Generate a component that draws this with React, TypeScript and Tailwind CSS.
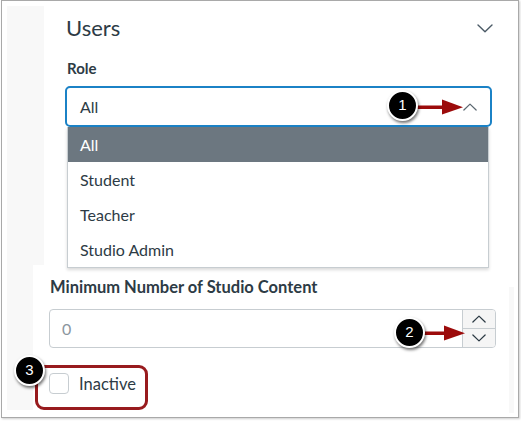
import { useState } from "react";

const roles = ["All", "Student", "Teacher", "Studio Admin"];

function Chevron({ up, className }: { up?: boolean; className?: string }) {
  return (
    <svg viewBox="0 0 16 9" className={className} fill="none">
      <path
        d={up ? "M1 8L8 1.2L15 8" : "M1 1L8 7.8L15 1"}
        stroke="currentColor"
        strokeWidth="1.4"
        strokeLinecap="round"
        strokeLinejoin="round"
      />
    </svg>
  );
}

function Callout({ n, className }: { n: number; className: string }) {
  return (
    <div
      className={`absolute w-[31px] h-[31px] rounded-full bg-black border-2 border-white shadow-[1px_2px_3px_rgba(0,0,0,0.55)] flex items-center justify-center text-white text-[15px] font-['Liberation_Sans',sans-serif] ${className}`}
    >
      {n}
    </div>
  );
}

function Arrow({ className, w }: { className: string; w: number }) {
  return (
    <svg className={`absolute ${className}`} width={w} height="16" viewBox={`0 0 ${w} 16`}>
      <rect x="0" y="6.5" width={w - 19} height="3.5" fill="#9c0b0b" />
      <polygon points={`${w - 21},0.5 ${w},8.2 ${w - 21},15.5`} fill="#9c0b0b" />
    </svg>
  );
}

export default function App() {
  const [role] = useState("All");

  return (
    <div className="w-[521px] h-[421px] bg-white font-['Lato',sans-serif] text-[#2d3b45]">
      <div className="relative ml-[1px] w-[518px] h-[418px] border border-[#a9a9a9] shadow-[1px_1px_2px_rgba(0,0,0,0.2)] flex pt-[5px] pl-[5px] pr-[4px]">
        {/* faint side strips */}
        <div className="w-[37px] flex flex-col">
          <div className="h-[259px] bg-[#f8f8f8]" />
          <div className="w-[26px] h-[145px] bg-[#f8f8f8]" />
        </div>

        <div className="flex-1 flex flex-col">
          <div className="mt-[8px] h-[28px] pl-[22px] pr-[16px] flex items-center justify-between">
            <h2 className="text-[22px] leading-[28px] font-normal">Users</h2>
            <Chevron className="w-[16px] h-[9px] text-[#4b5a66]" />
          </div>

          <label className="mt-[16px] pl-[23px] text-[15px] leading-[20px] font-bold">Role</label>

          <div className="mt-[8px] ml-[21px] w-[427px] h-[41px] border-2 border-[#1b82c6] rounded-[5px] flex items-center justify-between pl-[13px] pr-[13px]">
            <span className="text-[16px]">{role}</span>
            <Chevron up className="w-[14px] h-[8px] text-[#5b6770]" />
          </div>

          <ul className="ml-[23px] w-[422px] border border-t-0 border-[#c7cdd1] shadow-[0_2px_3px_rgba(0,0,0,0.15)] bg-white">
            {roles.map((r, i) => (
              <li
                key={r}
                className={`h-[35px] pl-[12px] flex items-center text-[16px] ${
                  i === 0 ? "bg-[#6c7780] text-white" : ""
                }`}
              >
                {r}
              </li>
            ))}
          </ul>

          <label className="mt-[9px] pl-[6px] text-[16.5px] leading-[20px] font-bold">
            Minimum Number of Studio Content
          </label>

          <div className="mt-[12px] ml-[5px] w-[447px] h-[39px] border border-[#c7cdd1] rounded-[4px] flex overflow-hidden">
            <span className="flex-1 pl-[12px] flex items-center text-[16px] text-[#8b969e]">0</span>
            <div className="w-[33px] border-l border-[#c7cdd1] bg-[#f5f5f5] flex flex-col">
              <div className="flex-1 flex items-center justify-center border-b border-[#c7cdd1]">
                <Chevron up className="w-[14px] h-[8px] text-[#2d3b45]" />
              </div>
              <div className="flex-1 flex items-center justify-center">
                <Chevron className="w-[14px] h-[8px] text-[#2d3b45]" />
              </div>
            </div>
          </div>

          <div className="mt-[25px] ml-[5px] flex items-center gap-[10px]">
            <div className="w-[20px] h-[21px] border border-[#c7cdd1] rounded-[4px] bg-white" />
            <span className="text-[16.5px] leading-[20px]">Inactive</span>
          </div>
        </div>

        <div className="w-[5px] flex flex-col">
          <div className="h-[281px]" />
          <div className="h-[126px] bg-[#f8f8f8]" />
        </div>

        {/* annotations */}
        <div className="absolute left-[33px] top-[364px] w-[113px] h-[45px] border-[3px] border-[#981b1e] rounded-[9px]" />
        <Arrow className="left-[414px] top-[98px]" w={47} />
        <Arrow className="left-[421px] top-[324px]" w={42} />
        <Callout n={1} className="left-[385px] top-[89px]" />
        <Callout n={2} className="left-[392px] top-[316px]" />
        <Callout n={3} className="left-[12px] top-[354px]" />
      </div>
    </div>
  );
}
